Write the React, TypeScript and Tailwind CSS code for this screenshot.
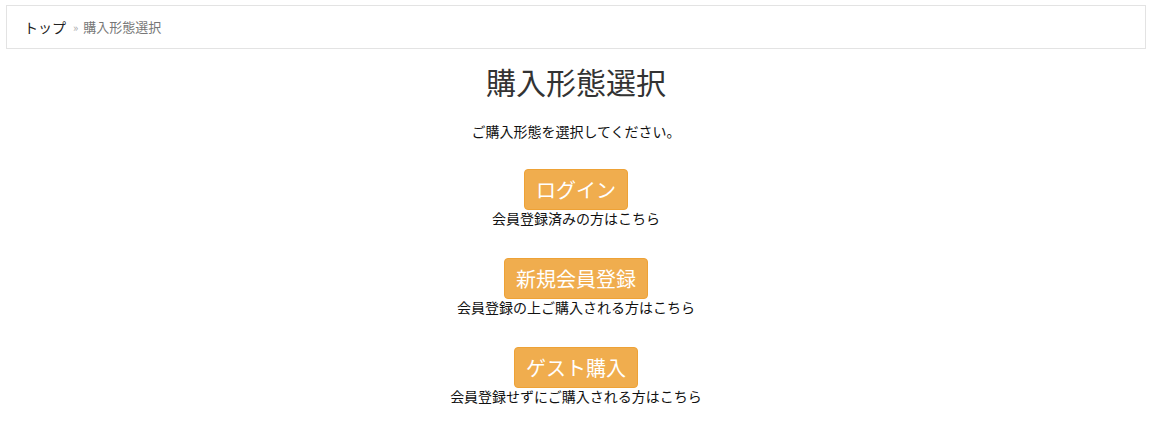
import React from "react";

const font = { fontFamily: '"Noto Sans CJK JP", "Noto Sans", sans-serif' };

function Choice({ label, caption }: { label: string; caption: string }) {
  return (
    <div className="flex flex-col items-center">
      <button className="h-[41px] px-[11px] bg-[#f0ad4e] border border-[#eea236] rounded-[4px] text-white text-[20px] leading-none">
        {label}
      </button>
      <p className="mt-[-2px] text-[14px] leading-[20px] text-[#111]">{caption}</p>
    </div>
  );
}

export default function App() {
  return (
    <div className="bg-white min-h-[442px] pt-[5px]" style={font}>
      <div className="ml-[6px] w-[1140px] h-[44px] border border-[#e3e3e3] flex items-center px-[17px] text-[14px]">
        <span className="text-[#222]">トップ</span>
        <span className="ml-[7px] mr-[5px] text-[#aaa] text-[11px]">»</span>
        <span className="text-[#777] text-[13px]">購入形態選択</span>
      </div>
      <div className="ml-[6px] w-[1140px] flex flex-col items-center">
        <h1 className="mt-[13px] text-[30px] leading-[38px] text-[#333]">購入形態選択</h1>
        <p className="mt-[21px] text-[14px] leading-[20px] text-[#111]">ご購入形態を選択してください。</p>
        <div className="mt-[28px] flex flex-col items-center gap-[30px]">
          <Choice label="ログイン" caption="会員登録済みの方はこちら" />
          <Choice label="新規会員登録" caption="会員登録の上ご購入される方はこちら" />
          <Choice label="ゲスト購入" caption="会員登録せずにご購入される方はこちら" />
        </div>
      </div>
    </div>
  );
}
